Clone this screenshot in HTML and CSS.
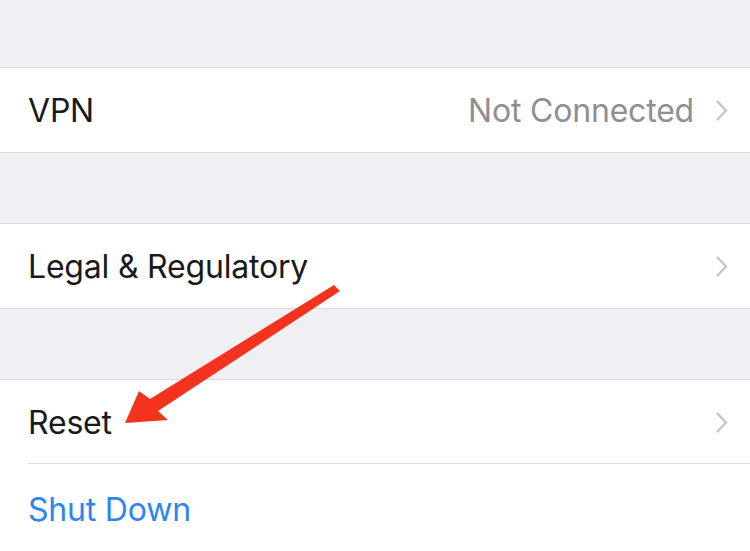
FILE: index.html
```html
<!DOCTYPE html>
<html>
<head>
<meta charset="utf-8">
<link rel="stylesheet" href="styles.css">
</head>
<body>
<div class="screen">
  <div class="gap gap-top"></div>
  <div class="group">
    <div class="row">
      <span class="label">VPN</span>
      <span class="value">Not Connected</span>
      <svg class="chev" width="12" height="21" viewBox="0 0 12 21"><path d="M1.5 1.5 L10 10.5 L1.5 19.5" fill="none" stroke="#c4c4c9" stroke-width="2.4" stroke-linecap="round" stroke-linejoin="round"/></svg>
    </div>
  </div>
  <div class="gap"></div>
  <div class="group">
    <div class="row">
      <span class="label">Legal &amp; Regulatory</span>
      <svg class="chev" width="12" height="21" viewBox="0 0 12 21"><path d="M1.5 1.5 L10 10.5 L1.5 19.5" fill="none" stroke="#c4c4c9" stroke-width="2.4" stroke-linecap="round" stroke-linejoin="round"/></svg>
    </div>
  </div>
  <div class="gap"></div>
  <div class="group group-last">
    <div class="row row-sep">
      <span class="label">Reset</span>
      <svg class="chev" width="12" height="21" viewBox="0 0 12 21"><path d="M1.5 1.5 L10 10.5 L1.5 19.5" fill="none" stroke="#c4c4c9" stroke-width="2.4" stroke-linecap="round" stroke-linejoin="round"/></svg>
    </div>
    <div class="row row-last">
      <span class="label blue">Shut Down</span>
    </div>
  </div>
  <svg class="arrow" width="750" height="551" viewBox="0 0 750 551">
    <polygon points="125,423 139,391 150,399 334,285 340,291 158,411 168,420" fill="#f4331f"/>
  </svg>
</div>
</body>
</html>
```
FILE: styles.css
```css
html, body {
  margin: 0;
  padding: 0;
  background: #efeff4;
}
.screen {
  position: relative;
  width: 750px;
  height: 551px;
  overflow: hidden;
  background: #efeff4;
  font-family: Inter, "Noto Sans", sans-serif;
}
.gap {
  height: 70px;
}
.gap-top {
  height: 67px;
}
.group {
  background: #fff;
  border-top: 1px solid #d9d9de;
  border-bottom: 1px solid #d9d9de;
}
.group-last {
  border-bottom: none;
}
.row {
  height: 84px;
  display: flex;
  align-items: center;
  padding: 0 22px 0 28px;
  position: relative;
}
.row-last {
  height: 90px;
}
.row-sep::after {
  content: "";
  position: absolute;
  left: 28px;
  right: 0;
  bottom: 0;
  height: 1px;
  background: #dcdce0;
}
.label {
  font-size: 32px;
  color: #1a1a1a;
  flex: 1;
  letter-spacing: -0.2px;
}
.value {
  font-size: 32px;
  color: #8e8e93;
  margin-right: 22px;
  letter-spacing: -0.2px;
}
.blue {
  color: #2d86f0;
}
.chev {
  display: block;
}
.arrow {
  position: absolute;
  left: 0;
  top: 0;
  pointer-events: none;
}
```
